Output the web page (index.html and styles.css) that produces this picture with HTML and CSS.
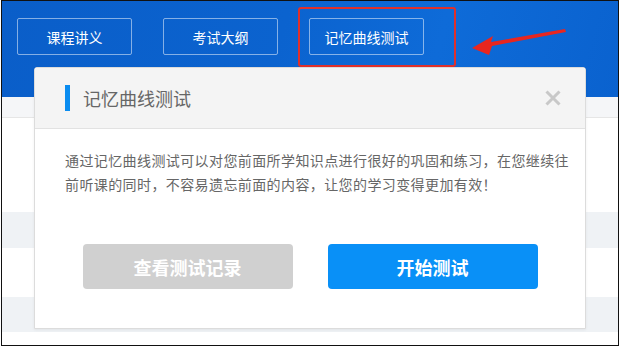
FILE: index.html
```html
<!DOCTYPE html>
<html lang="zh-CN">
<head>
    <meta charset="UTF-8">
    <title>记忆曲线测试</title>
    <link rel="stylesheet" href="styles.css">
</head>
<body>
    <div class="frame">
        <!-- Top nav -->
        <header class="course-header">
            <nav class="course-tabs">
                <a class="course-tab">课程讲义</a>
                <a class="course-tab">考试大纲</a>
                <a class="course-tab">记忆曲线测试</a>
            </nav>
            <!-- annotation marks -->
            <span class="mark-box"></span>
            <svg class="mark-arrow" width="110" height="30" viewBox="0 0 110 30">
                <polygon points="0,19 21,7 19,13 93,0 94,3 20,17 17,26" fill="#e8261f"/>
            </svg>
        </header>

        <!-- Page rows behind the dialog -->
        <div class="page-rows">
            <div class="row-sub"></div>
            <div class="row"></div>
            <div class="row striped"></div>
            <div class="row short"></div>
            <div class="row striped short"></div>
        </div>

        <!-- Dialog -->
        <div class="dialog">
            <div class="dialog-head">
                <span class="head-bar"></span>
                <h2 class="dialog-title">记忆曲线测试</h2>
                <span class="dialog-close">
                    <svg width="16" height="16" viewBox="0 0 16 16">
                        <path d="M1.5 1.5 L14.5 14.5 M14.5 1.5 L1.5 14.5" stroke="#c8c8c8" stroke-width="3"/>
                    </svg>
                </span>
            </div>
            <div class="dialog-body">
                <p class="dialog-text">通过记忆曲线测试可以对您前面所学知识点进行很好的巩固和练习，在您继续往前听课的同时，不容易遗忘前面的内容，让您的学习变得更加有效！</p>
                <div class="dialog-actions">
                    <button class="dlg-btn gray">查看测试记录</button>
                    <button class="dlg-btn blue">开始测试</button>
                </div>
            </div>
        </div>
    </div>
</body>
</html>
```

FILE: styles.css
```css
/* ----- Base ----- */
* {
    margin: 0;
    padding: 0;
    box-sizing: border-box;
    font-family: "Noto Sans CJK SC", "Noto Sans", sans-serif;
}

body {
    background: #fff;
}

.frame {
    position: relative;
    margin-left: 1px;
    width: 618px;
    height: 346px;
    border: 1px solid #111;
    overflow: hidden;
}

/* ----- Header ----- */
.course-header {
    position: relative;
    height: 96px;
    padding: 17px 0 0 15px;
    background: linear-gradient(105deg, #0a5ec9 0%, #0b63cf 45%, #0e6bd8 70%, #0a62cf 100%);
}

.course-tabs {
    display: flex;
    gap: 31px;
}

.course-tab {
    width: 115px;
    height: 37px;
    display: flex;
    align-items: center;
    justify-content: center;
    border: 1px solid rgba(255, 255, 255, 0.5);
    border-radius: 2px;
    color: #fff;
    font-size: 14px;
}

.mark-box {
    position: absolute;
    left: 296px;
    top: 6px;
    width: 158px;
    height: 60px;
    border: 2px solid #e0302b;
    border-radius: 3px;
}

.mark-arrow {
    position: absolute;
    left: 470px;
    top: 28px;
}

/* ----- Page rows ----- */
.row-sub {
    height: 21px;
    background: #f5f6f8;
    border-bottom: 1px solid #e6e6e6;
}

.row {
    height: 94px;
}

.row.striped {
    height: 36px;
    background: #eff2f5;
}

.row.short {
    height: 49px;
}

.row.striped.short {
    height: 35px;
}

/* ----- Dialog ----- */
.dialog {
    position: absolute;
    left: 32px;
    top: 66px;
    width: 552px;
    height: 262px;
    background: #fff;
    border: 1px solid #dcdcdc;
    border-radius: 3px 3px 0 0;
    box-shadow: 0 1px 3px rgba(0, 0, 0, 0.06);
}

.dialog-head {
    height: 61px;
    display: flex;
    align-items: center;
    padding: 0 24px 0 30px;
    background: #f4f4f4;
    border-bottom: 1px solid #e2e2e2;
}

.head-bar {
    width: 5px;
    height: 26px;
    background: #0a8cf0;
    margin-right: 13px;
}

.dialog-title {
    flex: 1;
    font-size: 18px;
    font-weight: normal;
    color: #666;
}

.dialog-close {
    display: flex;
}

.dialog-body {
    padding: 19px 16px 0 30px;
}

.dialog-text {
    font-size: 14px;
    letter-spacing: 0.4px;
    line-height: 24px;
    color: #666;
}

.dialog-actions {
    display: flex;
    justify-content: center;
    gap: 35px;
    margin-top: 48px;
    padding-right: 14px;
}

.dlg-btn {
    width: 210px;
    height: 45px;
    border: none;
    border-radius: 4px;
    color: #fff;
    font-size: 18px;
    font-weight: bold;
}

.dlg-btn.gray {
    background: #d0d0d0;
}

.dlg-btn.blue {
    background: #0990f7;
}
```
